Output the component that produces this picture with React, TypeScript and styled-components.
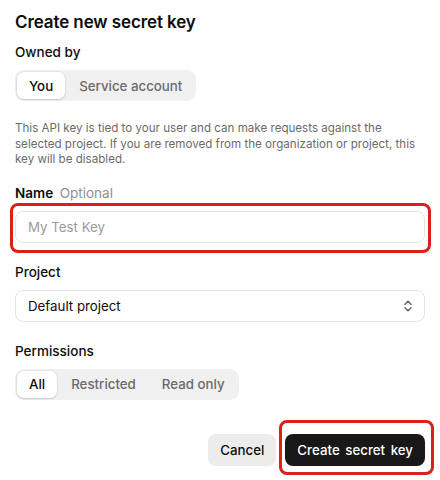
import React, { useState } from 'react';
import styled, { createGlobalStyle } from 'styled-components';

const GlobalStyle = createGlobalStyle`
  html, body {
    margin: 0;
    padding: 0;
    background: #ffffff;
  }
  body {
    font-family: Inter, "Liberation Sans", sans-serif;
    color: #0d0d0d;
    -webkit-font-smoothing: antialiased;
  }
`;

interface SegmentedProps {
  options: string[];
  value: string;
  onChange: (value: string) => void;
}

function Segmented(props: SegmentedProps): React.ReactElement {
  const { options, value, onChange } = props;
  return (
    <SegmentTrack>
      {options.map((option) => (
        <SegmentItem
          key={option}
          type="button"
          $active={option === value}
          onClick={() => onChange(option)}
        >
          {option}
        </SegmentItem>
      ))}
    </SegmentTrack>
  );
}

function ChevronUpDown(): React.ReactElement {
  return (
    <svg width="8" height="12" viewBox="0 0 8 12" fill="none" stroke="#5d5d5d" strokeWidth="1.3" strokeLinecap="round" strokeLinejoin="round">
      <path d="M1 4.2 L4 1.2 L7 4.2" />
      <path d="M1 7.8 L4 10.8 L7 7.8" />
    </svg>
  );
}

export default function App(): React.ReactElement {
  const [owner, setOwner] = useState('You');
  const [permission, setPermission] = useState('All');
  const [name, setName] = useState('');

  return (
    <>
      <GlobalStyle />
      <Panel>
        <Title>Create new secret key</Title>

        <Field>
          <Label>Owned by</Label>
          <Segmented options={['You', 'Service account']} value={owner} onChange={setOwner} />
        </Field>

        <Description>
          This API key is tied to your user and can make requests against the
          selected project. If you are removed from the organization or project, this
          key will be disabled.
        </Description>

        <Field>
          <Label>
            <Strong>Name</Strong> <Hint>Optional</Hint>
          </Label>
          <Highlighted $inset="-8px -6px -10px -5px">
            <TextInput
              placeholder="My Test Key"
              value={name}
              onChange={(e) => setName(e.target.value)}
            />
          </Highlighted>
        </Field>

        <Field>
          <Label>Project</Label>
          <SelectBox>
            <span>Default project</span>
            <ChevronUpDown />
          </SelectBox>
        </Field>

        <Field>
          <Label>Permissions</Label>
          <Segmented options={['All', 'Restricted', 'Read only']} value={permission} onChange={setPermission} />
        </Field>

        <Footer>
          <SecondaryButton type="button">Cancel</SecondaryButton>
          <Highlighted $inset="-14px -9px -9px -6px">
            <PrimaryButton type="button">Create secret key</PrimaryButton>
          </Highlighted>
        </Footer>
      </Panel>
    </>
  );
}

const Panel = styled.div`
  box-sizing: border-box;
  width: 440px;
  min-height: 480px;
  padding: 10px 15px 0 15px;
  display: flex;
  flex-direction: column;
`;

const Title = styled.h2`
  margin: 0 0 9px 0;
  font-size: 17px;
  line-height: 24px;
  font-weight: 600;
  letter-spacing: -0.1px;
`;

const Field = styled.div`
  display: flex;
  flex-direction: column;
  gap: 9px;
  margin-bottom: 20px;
`;

const Label = styled.div`
  font-size: 13.5px;
  line-height: 18px;
  font-weight: 500;
  color: #0d0d0d;
`;

const Strong = styled.span`
  font-weight: 600;
`;

const Hint = styled.span`
  margin-left: 3px;
  font-weight: 400;
  color: #8f8f8f;
`;

const SegmentTrack = styled.div`
  display: inline-flex;
  align-self: flex-start;
  padding: 2px;
  gap: 2px;
  background: #f0f0f0;
  border-radius: 9px;
`;

const SegmentItem = styled.button<{ $active: boolean }>`
  height: 27px;
  padding: 0 12px;
  border: none;
  border-radius: 7px;
  font-family: inherit;
  font-size: 13.3px;
  font-weight: 500;
  cursor: pointer;
  background: ${(p) => (p.$active ? '#ffffff' : 'transparent')};
  color: ${(p) => (p.$active ? '#0d0d0d' : '#6b6b6b')};
  box-shadow: ${(p) => (p.$active ? '0 0 0 1px rgba(0,0,0,0.04), 0 1px 2px rgba(0,0,0,0.12)' : 'none')};
`;

const Description = styled.p`
  margin: 0 0 16px 0;
  font-size: 11.6px;
  line-height: 15.5px;
  color: #6b6b6b;
`;

const Highlighted = styled.div<{ $inset: string }>`
  position: relative;
  &::after {
    content: '';
    position: absolute;
    inset: ${(p) => p.$inset};
    border: 3px solid #d9201a;
    border-radius: 8px;
    pointer-events: none;
  }
`;

const TextInput = styled.input`
  display: block;
  box-sizing: border-box;
  width: 100%;
  height: 32px;
  padding: 0 12px;
  border: 1px solid #e3e3e3;
  border-radius: 8px;
  font-family: inherit;
  font-size: 13.3px;
  color: #0d0d0d;
  outline: none;
  &::placeholder {
    color: #9b9b9b;
  }
`;

const SelectBox = styled.div`
  box-sizing: border-box;
  height: 32px;
  padding: 0 12px;
  display: flex;
  align-items: center;
  justify-content: space-between;
  border: 1px solid #e3e3e3;
  border-radius: 8px;
  font-size: 13.3px;
  color: #0d0d0d;
`;

const Footer = styled.div`
  display: flex;
  justify-content: flex-end;
  align-items: center;
  gap: 9px;
  margin-top: 14px;
`;

const BaseButton = styled.button`
  display: block;
  height: 32px;
  padding: 0 12px;
  border: none;
  border-radius: 8px;
  font-family: inherit;
  font-size: 13.3px;
  font-weight: 500;
  cursor: pointer;
`;

const SecondaryButton = styled(BaseButton)`
  background: #ececec;
  color: #0d0d0d;
`;

const PrimaryButton = styled(BaseButton)`
  background: #181818;
  color: #ffffff;
  word-spacing: 2px;
`;
